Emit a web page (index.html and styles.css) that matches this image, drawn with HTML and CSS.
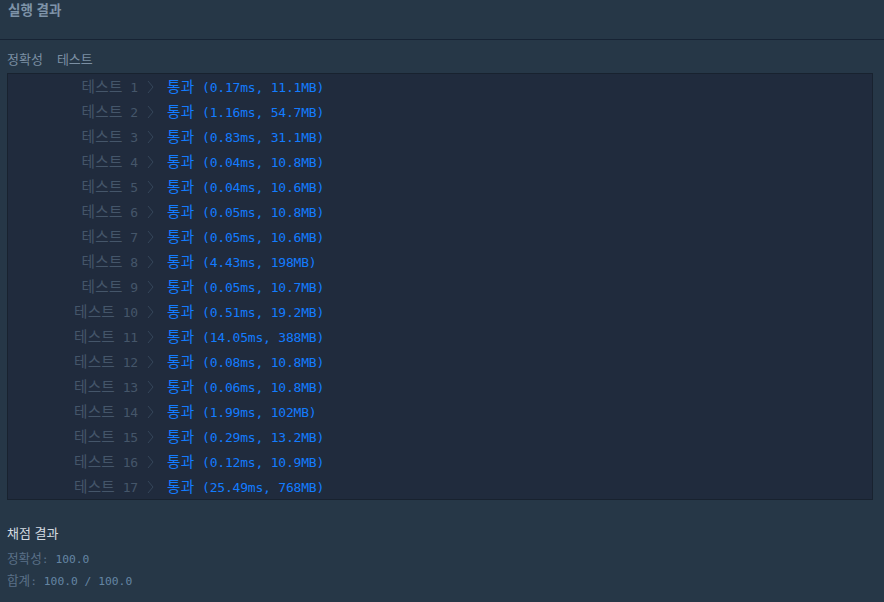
FILE: index.html
```html
<!DOCTYPE html>
<html lang="ko">

<head>
    <meta charset="UTF-8">
    <title>실행 결과</title>
    <link rel="stylesheet" href="styles.css">
</head>

<body>
    <div class="console-header">
        <h6>실행 결과</h6>
    </div>

    <section class="console-output">
        <p class="group-title"><span>정확성</span><span class="gap">테스트</span></p>
        <div class="result-table" id="rows"></div>

        <p class="score-title">채점 결과</p>
        <p class="score-line"><span class="ko">정확성</span>: <span class="num">100.0</span></p>
        <p class="score-line"><span class="ko">합계</span>: <span class="num">100.0 / 100.0</span></p>
    </section>

    <script>
        const results = [
            ["0.17ms", "11.1MB"], ["1.16ms", "54.7MB"], ["0.83ms", "31.1MB"],
            ["0.04ms", "10.8MB"], ["0.04ms", "10.6MB"], ["0.05ms", "10.8MB"],
            ["0.05ms", "10.6MB"], ["4.43ms", "198MB"], ["0.05ms", "10.7MB"],
            ["0.51ms", "19.2MB"], ["14.05ms", "388MB"], ["0.08ms", "10.8MB"],
            ["0.06ms", "10.8MB"], ["1.99ms", "102MB"], ["0.29ms", "13.2MB"],
            ["0.12ms", "10.9MB"], ["25.49ms", "768MB"]
        ];

        const table = document.getElementById("rows");
        results.forEach(function(r, i) {
            const row = document.createElement("div");
            row.className = "result-row";
            row.innerHTML =
                '<span class="label"><span class="ko">테스트</span> ' + (i + 1) + '</span>' +
                '<span class="arrow"><svg width="7" height="14" viewBox="0 0 7 14"><polyline points="1,1 6,7 1,13" /></svg></span>' +
                '<span class="result"><span class="ko">통과</span> (' + r[0] + ', ' + r[1] + ')</span>';
            table.appendChild(row);
        });
    </script>
</body>

</html>
```

FILE: styles.css
```css
/* General Styles */

body {
    margin: 0;
    padding: 0;
    background: #263747;
    font-family: "DejaVu Sans Mono", "Noto Sans CJK KR", monospace;
    color: #fff;
    width: 884px;
    height: 602px;
    overflow: hidden;
}

.ko {
    font-family: "Noto Sans CJK KR", sans-serif;
}

/* Header */

.console-header {
    height: 39px;
    border-bottom: 1px solid #172334;
    padding: 0 8px;
}

.console-header h6 {
    margin: 0;
    line-height: 18px;
    font-family: "Noto Sans CJK KR", sans-serif;
    font-size: 13.5px;
    font-weight: bold;
    color: #7e93a8;
}

/* Output */

.console-output {
    padding: 0 11px 0 7px;
}

.group-title {
    margin: 0;
    padding-top: 11px;
    height: 22px;
    line-height: 16px;
    font-family: "Noto Sans CJK KR", sans-serif;
    font-size: 13px;
    color: #7b8fa3;
}

.group-title .gap {
    margin-left: 14px;
}

.result-table {
    background: #202b3d;
    border: 1px solid #18222f;
    margin-bottom: 22px;
}

.result-row {
    display: flex;
    align-items: center;
    height: 25px;
    font-size: 13px;
    letter-spacing: -0.2px;
    line-height: 16px;
    white-space: nowrap;
}

.result-row .ko {
    font-size: 14.6px;
    line-height: 16px;
    letter-spacing: 0.3px;
}

.label {
    width: 130px;
    text-align: right;
    color: #45566a;
}

.arrow {
    width: 29px;
    box-sizing: border-box;
    padding-left: 9px;
    line-height: 0;
}

.arrow svg {
    display: block;
}

.arrow polyline {
    fill: none;
    stroke: #35465a;
    stroke-width: 1;
}

.result {
    color: #137cff;
}

.score-title {
    margin: 0 0 3px 0;
    height: 22px;
    line-height: 22px;
    font-family: "Noto Sans CJK KR", sans-serif;
    font-size: 13px;
    color: #d4dbe2;
}

.score-line {
    margin: 0;
    height: 22px;
    line-height: 22px;
    font-size: 11.3px;
    color: #5a7088;
}

.score-line .ko {
    font-size: 12.6px;
}

.score-line .num {
    color: #6485a3;
}
```
